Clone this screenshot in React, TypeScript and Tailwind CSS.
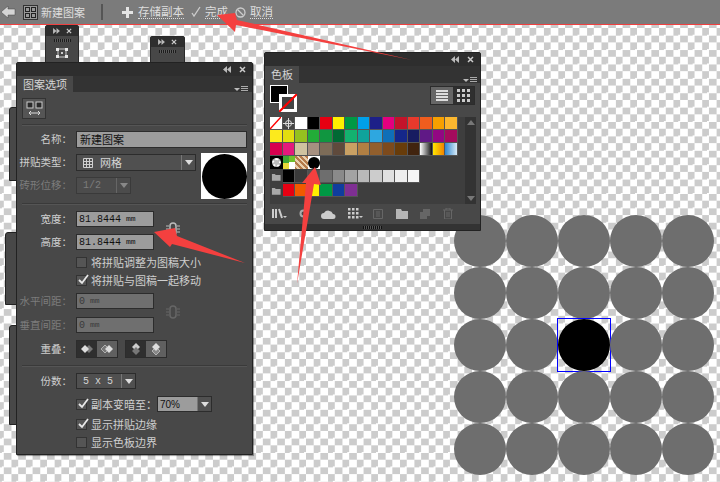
const font = { fontFamily: '"Noto Sans CJK SC", "Liberation Sans", sans-serif' }

const row1 = ['#ffffff', '#000000', '#e60012', '#fff100', '#009944', '#00a0e9', '#1d2088', '#e4007f', '#c4132a', '#e8392c', '#ef5d1e', '#f6a000', '#fbb72f']
const row2 = ['#fcea1d', '#e3dd10', '#95c11f', '#22ac38', '#109640', '#006934', '#13b26f', '#0fa39b', '#2ea7e0', '#0f6fb8', '#15278a', '#171c61', '#601986', '#920783', '#a40b5d']
const row3 = ['#d7004f', '#e4197c', '#d0c3a0', '#a69080', '#7d6c58', '#5f4a3c', '#c9a063', '#b17f43', '#925f2d', '#7d4a1c', '#683c0a', '#41240f']
const grays = ['#000000', '#3a3a3a', '#505050', '#6e6e6e', '#8a8a8a', '#a3a3a3', '#b9b9b9', '#cccccc', '#e0e0e0', '#eeeeee', '#f5f5f5']
const brights = ['#e60012', '#f15a00', '#fff100', '#009944', '#0f3d9e', '#7f2f93']

function Swatch({ color }: { color: string }) {
  return <div className="h-[13px] w-[12.5px] shrink-0 border-r border-b border-[#555]" style={{ backgroundColor: color }} />
}

function Folder() {
  return (
    <svg width="12.5" height="13" viewBox="0 0 13 13" className="shrink-0">
      <path d="M2 4h3l1 1h5v6H2z" fill="#a8a8a8" />
    </svg>
  )
}

function Caret({ dim }: { dim?: boolean }) {
  return (
    <div className={`flex w-[14px] items-center justify-center self-stretch border-l ${dim ? 'border-[#666]' : 'border-[#777]'}`}>
      <div className={`h-0 w-0 border-x-[4px] border-t-[5px] border-x-transparent ${dim ? 'border-t-[#888]' : 'border-t-[#ddd]'}`} />
    </div>
  )
}

function Label({ children, dim }: { children: string; dim?: boolean }) {
  return (
    <div className={`w-[55px] shrink-0 text-right text-[10.5px] leading-none whitespace-nowrap ${dim ? 'text-[#7c7c7c]' : 'text-[#cfcfcf]'}`}>
      {children}
    </div>
  )
}

function NumField({ value, unit, dim }: { value: string; unit: string; dim?: boolean }) {
  return (
    <div
      className={`flex h-[16px] w-[78px] items-center gap-[5px] border border-[#2c2c2c] pl-[2px] text-[10px] ${dim ? 'bg-[#6f6f6f] text-[#3a3a3a]' : 'bg-[#9c9c9c] text-[#111]'}`}
      style={{ fontFamily: '"Liberation Mono", monospace' }}
    >
      <span>{value}</span>
      <span className="text-[8px]">{unit}</span>
    </div>
  )
}

function Check({ on }: { on?: boolean }) {
  return (
    <div className="relative h-[11px] w-[11px] shrink-0 border border-[#333] bg-[#555]">
      {on && (
        <svg width="13" height="13" viewBox="0 0 13 13" className="absolute -top-[3px] left-0">
          <path d="M2 7l3 3 6-8" fill="none" stroke="#e8e8e8" strokeWidth="1.8" />
        </svg>
      )}
    </div>
  )
}

function Divider({ top }: { top: string }) {
  return <div className={`${top} mx-[5px] h-[2px] border-t border-b border-t-[#3a3a3a] border-b-[#555]`} />
}

function LinkIcon({ color, className }: { color: string; className: string }) {
  return (
    <svg width="16" height="16" viewBox="0 0 16 16" className={className}>
      <rect x="5" y="2" width="6" height="12" rx="3" fill="none" stroke={color} strokeWidth="1.5" />
      <path d="M1 5h3M1 8h3M1 11h3M12 5h3M12 8h3M12 11h3" stroke={color} />
    </svg>
  )
}

function TitleBar() {
  return (
    <div className="flex h-[13px] items-center justify-end gap-[8px] bg-[#2e2e2e] pr-[6px] text-[#bbb]">
      <svg width="8" height="7" viewBox="0 0 8 7"><path d="M4 0v7L0 3.5zM8 0v7L4 3.5z" fill="#bbb" /></svg>
      <svg width="7" height="7" viewBox="0 0 7 7"><path d="M1 1l5 5M6 1L1 6" stroke="#ccc" strokeWidth="1.5" /></svg>
    </div>
  )
}

function MiniPanel({ className, icon }: { className: string; icon?: boolean }) {
  return (
    <div className={`absolute flex flex-col items-center rounded-t-[2px] border border-[#2a2a2a] bg-[#474747] ${className}`}>
      <div className="flex h-[10px] w-full items-center justify-center gap-[6px] bg-[#2e2e2e]">
        <svg width="7" height="6" viewBox="0 0 8 7"><path d="M0 0v7l4-3.5zM4 0v7l4-3.5z" fill="#bbb" /></svg>
        <svg width="6" height="6" viewBox="0 0 7 7"><path d="M1 1l5 5M6 1L1 6" stroke="#ccc" strokeWidth="1.4" /></svg>
      </div>
      <div className="mt-[3px] h-[3px] w-[17px] bg-[repeating-linear-gradient(90deg,#1c1c1c_0_1px,#5a5a5a_1px_2px)]" />
      {icon && (
        <svg width="14" height="12" viewBox="0 0 14 12" className="mt-[5px]">
          <path d="M3 2h8v8H3z" fill="none" stroke="#ccc" />
          <path d="M1 1h3v3H1zM10 1h3v3h-3zM1 8h3v3H1zM10 8h3v3h-3z" fill="#e8e8e8" />
          <rect x="6" y="5" width="2" height="2" fill="#ccc" />
        </svg>
      )}
    </div>
  )
}

function Tool({ children, text }: { children?: React.ReactNode; text: string }) {
  return (
    <div className="flex items-center gap-[4px]">
      {children}
      <span className="border-b border-dotted border-[#ddd] text-[11.5px] leading-[13px] text-[#dedede]">{text}</span>
    </div>
  )
}

function PatternOptions() {
  return (
    <div className="absolute top-[62px] left-[16px] flex h-[393px] w-[237px] flex-col rounded-t-[2px] border border-[#222] bg-[#484848] shadow-[1px_1px_1px_rgba(0,0,0,0.4)]">
      <TitleBar />
      <div className="flex h-[16px] items-end bg-[#333]">
        <div className="flex h-[16px] w-[56px] items-center justify-center bg-[#484848] text-[11px] text-[#d5d5d5]">图案选项</div>
        <div className="ml-auto flex items-center gap-[1px] pr-[4px]">
          <div className="h-0 w-0 border-x-[3px] border-t-[3px] border-x-transparent border-t-[#bbb]" />
          <div className="h-[6px] w-[7px] bg-[repeating-linear-gradient(180deg,#aaa_0_1px,#333_1px_2px)]" />
        </div>
      </div>
      <div className="mt-[6px] ml-[5px] flex h-[21px] w-[24px] items-center justify-center border border-[#333] bg-[#555]">
        <svg width="17" height="15" viewBox="0 0 17 15">
          <rect x="1" y="1" width="6" height="6" fill="#2a2a2a" stroke="#ccc" />
          <rect x="10" y="1" width="6" height="6" fill="#2a2a2a" stroke="#ccc" />
          <path d="M3 12h11M5 10l-2 2 2 2M12 10l2 2-2 2" fill="none" stroke="#ddd" />
        </svg>
      </div>
      <Divider top="mt-[5px]" />

      <div className="mt-[5px] flex h-[17px] items-center">
        <Label>名称：</Label>
        <div className="ml-[4px] flex h-[17px] w-[171px] items-center border border-[#2c2c2c] bg-[#9c9c9c] pl-[3px] text-[11px] text-[#111]">新建图案</div>
      </div>

      <div className="relative mt-[6px] flex h-[17px] items-center">
        <Label>拼贴类型：</Label>
        <div className="ml-[4px] flex h-[17px] w-[120px] items-center border border-[#2c2c2c] bg-[#505050] text-[11px] text-[#d5d5d5]">
          <svg width="10" height="10" viewBox="0 0 10 10" className="mr-[7px] ml-[6px]">
            <path d="M.5.5h9v9h-9zM3.5.5v9M6.5.5v9M.5 3.5h9M.5 6.5h9" fill="none" stroke="#cfcfcf" strokeWidth="1" />
          </svg>
          <span className="flex-1">网格</span>
          <Caret />
        </div>
        <div className="absolute top-[-1px] left-[184px] flex h-[46px] w-[46px] items-center justify-center bg-white">
          <div className="h-[45px] w-[45px] rounded-full bg-black" />
        </div>
      </div>

      <div className="mt-[6px] flex h-[17px] items-center">
        <Label dim>砖形位移：</Label>
        <div className="ml-[4px] flex h-[17px] w-[55px] items-center border border-[#3a3a3a] bg-[#4c4c4c] pl-[6px] text-[10px] text-[#7c7c7c]" style={{ fontFamily: '"Liberation Mono", monospace' }}>
          <span className="flex-1">1/2</span>
          <Caret dim />
        </div>
      </div>

      <Divider top="mt-[9px]" />

      <div className="relative mt-[6px] flex h-[16px] items-center">
        <Label>宽度：</Label>
        <div className="ml-[4px]"><NumField value="81.8444" unit="mm" /></div>
        <LinkIcon color="#bbbbbb" className="absolute top-[10px] left-[148px]" />
      </div>
      <div className="mt-[7px] flex h-[16px] items-center">
        <Label>高度：</Label>
        <div className="ml-[4px]"><NumField value="81.8444" unit="mm" /></div>
      </div>

      <div className="mt-[6px] ml-[59px] flex h-[12px] items-center gap-[4px] text-[11px] text-[#cfcfcf]">
        <Check />
        <span>将拼贴调整为图稿大小</span>
      </div>
      <div className="mt-[6px] ml-[59px] flex h-[12px] items-center gap-[4px] text-[11px] text-[#cfcfcf]">
        <Check on />
        <span>将拼贴与图稿一起移动</span>
      </div>

      <div className="relative mt-[7px] flex h-[16px] items-center">
        <Label dim>水平间距：</Label>
        <div className="ml-[4px]"><NumField value="0" unit="mm" dim /></div>
        <LinkIcon color="#666666" className="absolute top-[11px] left-[148px]" />
      </div>
      <div className="mt-[8px] flex h-[16px] items-center">
        <Label dim>垂直间距：</Label>
        <div className="ml-[4px]"><NumField value="0" unit="mm" dim /></div>
      </div>

      <div className="mt-[7px] flex h-[18px] items-center">
        <Label>重叠：</Label>
        <div className="ml-[4px] flex h-[18px] w-[42px] border border-[#2c2c2c]">
          <div className="flex flex-1 items-center justify-center bg-[#2f2f2f]">
            <svg width="14" height="10" viewBox="0 0 14 10"><path d="M9 1l4 4-4 4-4-4z" fill="#777" /><path d="M5 1l4 4-4 4-4-4z" fill="#ddd" /></svg>
          </div>
          <div className="flex flex-1 items-center justify-center bg-[#606060]">
            <svg width="14" height="10" viewBox="0 0 14 10"><path d="M5 1l4 4-4 4-4-4z" fill="#777" stroke="#ddd" strokeWidth=".6" /><path d="M9 1l4 4-4 4-4-4z" fill="#ddd" /></svg>
          </div>
        </div>
        <div className="ml-[7px] flex h-[18px] w-[42px] border border-[#2c2c2c]">
          <div className="flex flex-1 items-center justify-center bg-[#2f2f2f]">
            <svg width="10" height="14" viewBox="0 0 10 14"><path d="M5 1l4 4-4 4-4-4z" fill="#ccc" /><path d="M5 5l4 4-4 4-4-4z" fill="#777" /></svg>
          </div>
          <div className="flex flex-1 items-center justify-center bg-[#606060]">
            <svg width="10" height="14" viewBox="0 0 10 14"><path d="M5 5l4 4-4 4-4-4z" fill="#888" stroke="#ddd" strokeWidth=".6" /><path d="M5 1l4 4-4 4-4-4z" fill="#ddd" /></svg>
          </div>
        </div>
      </div>

      <Divider top="mt-[7px]" />

      <div className="mt-[6px] flex h-[16px] items-center">
        <Label>份数：</Label>
        <div className="ml-[4px] flex h-[16px] w-[60px] items-center border border-[#2c2c2c] bg-[#505050] pl-[6px] text-[10px] text-[#d5d5d5]" style={{ fontFamily: '"Liberation Mono", monospace' }}>
          <span className="flex-1">5 x 5</span>
          <Caret />
        </div>
      </div>

      <div className="mt-[7px] ml-[59px] flex h-[16px] items-center gap-[4px] text-[11px] text-[#cfcfcf]">
        <Check on />
        <span className="w-[62px] whitespace-nowrap">副本变暗至：</span>
        <div className="flex h-[16px] w-[55px] items-center border border-[#2c2c2c] bg-[#9c9c9c] pl-[2px] text-[10px] text-[#111]" style={{ fontFamily: '"Liberation Sans", sans-serif' }}>
          <span className="flex-1">70%</span>
          <div className="flex items-center self-stretch bg-[#505050]"><Caret /></div>
        </div>
      </div>
      <div className="mt-[6px] ml-[59px] flex h-[12px] items-center gap-[4px] text-[11px] text-[#cfcfcf]">
        <Check on />
        <span>显示拼贴边缘</span>
      </div>
      <div className="mt-[6px] ml-[59px] flex h-[12px] items-center gap-[4px] text-[11px] text-[#cfcfcf]">
        <Check />
        <span>显示色板边界</span>
      </div>
    </div>
  )
}

function SwatchesPanel() {
  return (
    <div className="absolute top-[52px] left-[264px] flex h-[179px] w-[217px] flex-col rounded-t-[2px] border border-[#222] bg-[#484848]">
      <TitleBar />
      <div className="flex h-[17px] items-end bg-[#333]">
        <div className="flex h-[17px] w-[34px] items-center justify-center bg-[#484848] text-[11px] text-[#d5d5d5]">色板</div>
        <div className="ml-auto flex items-center gap-[1px] pr-[3px]">
          <div className="h-0 w-0 border-x-[3px] border-t-[3px] border-x-transparent border-t-[#bbb]" />
          <div className="h-[6px] w-[7px] bg-[repeating-linear-gradient(180deg,#aaa_0_1px,#333_1px_2px)]" />
        </div>
      </div>

      <div className="flex h-[34px] items-start justify-between pr-[5px] pl-[5px]">
        <div className="relative mt-[2px] h-[27px] w-[27px]">
          <div className="h-[18px] w-[18px] border border-white bg-black" />
          <div className="absolute top-[9px] left-[9px] flex h-[18px] w-[18px] items-center justify-center border-[3px] border-white bg-[#444]">
            <svg width="18" height="18" viewBox="0 0 18 18" className="absolute -top-[3px] -left-[3px]"><path d="M0 18L18 0" stroke="#f00" strokeWidth="2" /></svg>
          </div>
        </div>
        <div className="mt-[3px] flex h-[19px] w-[45px] border border-[#2c2c2c]">
          <div className="flex flex-1 items-center justify-center bg-[#666]">
            <div className="h-[11px] w-[12px] bg-[repeating-linear-gradient(180deg,#ddd_0_2px,#666_2px_3px)]" />
          </div>
          <div className="flex flex-1 items-center justify-center bg-[#2f2f2f]">
            <svg width="13" height="13" viewBox="0 0 13 13">
              <path d="M0 0h3v3H0zM5 0h3v3H5zM10 0h3v3h-3zM0 5h3v3H0zM5 5h3v3H5zM10 5h3v3h-3zM0 10h3v3H0zM5 10h3v3H5zM10 10h3v3h-3z" fill="#ccc" />
            </svg>
          </div>
        </div>
      </div>

      <div className="ml-[5px] flex h-[87px] w-[206px] justify-between bg-[#3e3e3e]">
        <div className="flex w-[188px] flex-col">
          <div className="flex">
            <div className="flex h-[13px] w-[12.5px] items-center justify-center border-r border-b border-[#555] bg-white">
              <svg width="11" height="12" viewBox="0 0 11 12"><path d="M0 12L11 0" stroke="#f00" strokeWidth="1.5" /></svg>
            </div>
            <div className="flex h-[13px] w-[12.5px] items-center justify-center border-r border-b border-[#555] bg-[#444]">
              <svg width="11" height="11" viewBox="0 0 11 11"><circle cx="5.5" cy="5.5" r="3" fill="none" stroke="#ddd" /><path d="M5.5 0v11M0 5.5h11" stroke="#ddd" /></svg>
            </div>
            {row1.map((c) => <Swatch key={c} color={c} />)}
          </div>
          <div className="flex">{row2.map((c) => <Swatch key={c} color={c} />)}</div>
          <div className="flex">
            {row3.map((c) => <Swatch key={c} color={c} />)}
            <div className="h-[13px] w-[12.5px] border-r border-b border-[#555] bg-[linear-gradient(90deg,#fff,#111)]" />
            <div className="h-[13px] w-[12.5px] border-r border-b border-[#555] bg-[linear-gradient(90deg,#ffe600,#f08300)]" />
            <div className="h-[13px] w-[12.5px] border-r border-b border-[#555] bg-[linear-gradient(90deg,#2e86d0,#d9ecf8)]" />
          </div>
          <div className="flex h-[14px]">
            <div className="flex h-[13px] w-[12.5px] items-center justify-center bg-black">
              <div className="h-[9px] w-[9px] rounded-full border-2 border-dotted border-white bg-[#bbb]" />
            </div>
            <div className="h-[13px] w-[12.5px] bg-[conic-gradient(#6fbf2c_0_25%,#fff_25%_50%,#e9d93a_50%_75%,#3fa535_75%)]" />
            <div className="h-[13px] w-[12.5px] bg-[repeating-linear-gradient(45deg,#b57a4a_0_2px,#e8cfae_2px_4px)]" />
            <div className="flex h-[13px] w-[12.5px] items-center justify-center bg-white">
              <div className="h-[12px] w-[12px] rounded-full bg-black" />
            </div>
          </div>
          <div className="flex">
            <Folder />
            {grays.map((c) => <Swatch key={c} color={c} />)}
          </div>
          <div className="mt-[1px] flex">
            <Folder />
            {brights.map((c) => <Swatch key={c} color={c} />)}
          </div>
        </div>
        <div className="flex w-[11px] flex-col items-center justify-between bg-[#333] py-[3px]">
          <div className="h-0 w-0 border-x-[4px] border-b-[5px] border-x-transparent border-b-[#777]" />
          <div className="h-0 w-0 border-x-[4px] border-t-[5px] border-x-transparent border-t-[#777]" />
        </div>
      </div>

      <div className="flex h-[19px] items-center pl-[7px]">
        <svg width="15" height="11" viewBox="0 0 15 11" className="mr-[12px]"><path d="M1 1v9M4 1v9M7 1l3 9" stroke="#ccc" strokeWidth="2" fill="none" /><path d="M11 8h4l-2 2z" fill="#ccc" /></svg>
        <svg width="9" height="9" viewBox="0 0 9 9" className="mr-[12px]"><circle cx="4.5" cy="4.5" r="3" fill="none" stroke="#aaa" strokeWidth="2" /></svg>
        <svg width="16" height="10" viewBox="0 0 16 10" className="mr-[12px]"><path d="M4 10a3 3 0 0 1 0-6 5 5 0 0 1 9 1 2.5 2.5 0 0 1 0 5z" fill="#ccc" /></svg>
        <svg width="15" height="11" viewBox="0 0 15 11" className="mr-[10px]"><path d="M0 0h2.500v2.500H0zM4 0h2.500v2.500H4zM8 0h2.500v2.500H8zM0 4h2.500v2.500H0zM4 4h2.500v2.500H4zM8 4h2.500v2.500H8zM0 8h2.500v2.500H0zM4 8h2.500v2.500H4zM8 8h2.500v2.500H8z" fill="#ccc" /><path d="M11 8h4l-2 2z" fill="#ccc" /></svg>
        <svg width="10" height="10" viewBox="0 0 10 10" className="mr-[13px]"><path d="M.5.5h9v9h-9zM3 3h4M3 5h4M3 7h4" fill="none" stroke="#666" /></svg>
        <svg width="12" height="10" viewBox="0 0 12 10" className="mr-[12px]"><path d="M0 0h5l1 2h6v8H0z" fill="#b5b5b5" /></svg>
        <svg width="10" height="10" viewBox="0 0 10 10" className="mr-[13px]"><path d="M3 0h7v7H7v3H0V3h3z" fill="#666" /></svg>
        <svg width="10" height="11" viewBox="0 0 10 11"><path d="M0 2h10M3 2V0h4v2M1.500 2v9h7V2M4 4v5M6 4v5" fill="none" stroke="#666" /></svg>
      </div>
      <div className="mt-auto flex h-[6px] items-center justify-center bg-[#333]">
        <div className="h-[3px] w-[19px] bg-[repeating-linear-gradient(90deg,#111_0_1px,#555_1px_2px)]" />
      </div>
    </div>
  )
}

export default function App() {
  return (
    <div className="relative h-[482px] w-[720px] overflow-hidden bg-white" style={font}>
      <div className="absolute inset-x-0 top-[25px] bottom-0 bg-[conic-gradient(#cccccc_25%,#ffffff_25%_50%,#cccccc_50%_75%,#ffffff_75%)] bg-[length:14.4px_14.4px] bg-[position:3.8px_3px]" />

      <div className="relative flex h-[25px] items-center border-b-[1px] border-b-[#f04040] bg-[#7b7b7b]">
        <svg width="15" height="14" viewBox="0 0 15 14" className="ml-[1px]"><path d="M0 7l7-6v3h7v6H7v3z" fill="#d5d5d5" stroke="#444" strokeWidth=".5" /></svg>
        <div className="ml-[7px] flex h-[15px] w-[15px] flex-wrap content-center justify-center gap-[1px] border border-[#333] bg-[#999]">
          <div className="h-[5px] w-[5px] border border-[#222]" />
          <div className="h-[5px] w-[5px] border border-[#222]" />
          <div className="h-[5px] w-[5px] border border-[#222]" />
          <div className="h-[5px] w-[5px] border border-[#222]" />
        </div>
        <span className="ml-[3px] text-[11px] text-[#dedede]">新建图案</span>
        <div className="mr-[19px] ml-[16px] h-[16px] w-[2px] bg-[#555]" />
        <svg width="11" height="11" viewBox="0 0 11 11" className="mr-[5px]"><path d="M4 0h3v4h4v3H7v4H4V7H0V4h4z" fill="#e4e4e4" /></svg>
        <Tool text="存储副本" />
        <div className="ml-[7px]">
          <Tool text="完成">
            <svg width="10" height="12" viewBox="0 0 10 12"><path d="M1 7l2 3 6-9" fill="none" stroke="#ccc" strokeWidth="1.3" /></svg>
          </Tool>
        </div>
        <div className="ml-[7px]">
          <Tool text="取消">
            <svg width="11" height="11" viewBox="0 0 11 11"><circle cx="5.500" cy="5.500" r="4.500" fill="none" stroke="#ccc" strokeWidth="1.3" /><path d="M2.500 2.500l6 6" stroke="#ccc" strokeWidth="1.3" /></svg>
          </Tool>
        </div>
      </div>

      <MiniPanel className="top-[25px] left-[45px] h-[39px] w-[34px]" icon />
      <MiniPanel className="top-[36px] left-[150px] h-[28px] w-[35px]" />
      <div className="absolute top-[107px] left-[9px] h-[74px] w-[8px] rounded-tl-[3px] border border-[#222] bg-[#484848]" />
      <div className="absolute top-[232px] left-[5px] h-[73px] w-[12px] rounded-tl-[3px] border border-[#222] bg-[#484848]" />
      <div className="absolute top-[325px] left-[9px] h-[100px] w-[8px] rounded-tl-[3px] border border-[#222] bg-[#484848]" />

      <div className="absolute top-[215px] left-[454px] grid grid-cols-[repeat(5,52px)] grid-rows-[repeat(5,52px)]">
        {Array.from({ length: 25 }, (_, i) => (
          <div key={i} className={`relative h-[52px] w-[52px] rounded-full ${i === 12 ? 'bg-black' : 'bg-[#6e6e6e]'}`}>
            {i === 12 && <div className="absolute -inset-px border border-[#0000ff]" />}
          </div>
        ))}
      </div>

      <PatternOptions />
      <SwatchesPanel />

      <svg width="720" height="482" className="pointer-events-none absolute inset-0">
        <path d="M412 60L237 20l-2-7-18 2 18 17 1-7z" fill="#f4403f" />
        <path d="M245 263L177 236l-2-8-21 4 16 15 2-3z" fill="#f4403f" />
        <path d="M297 284L306 183h-4L315 167l6 18-7-1z" fill="#f4403f" />
      </svg>
    </div>
  )
}
